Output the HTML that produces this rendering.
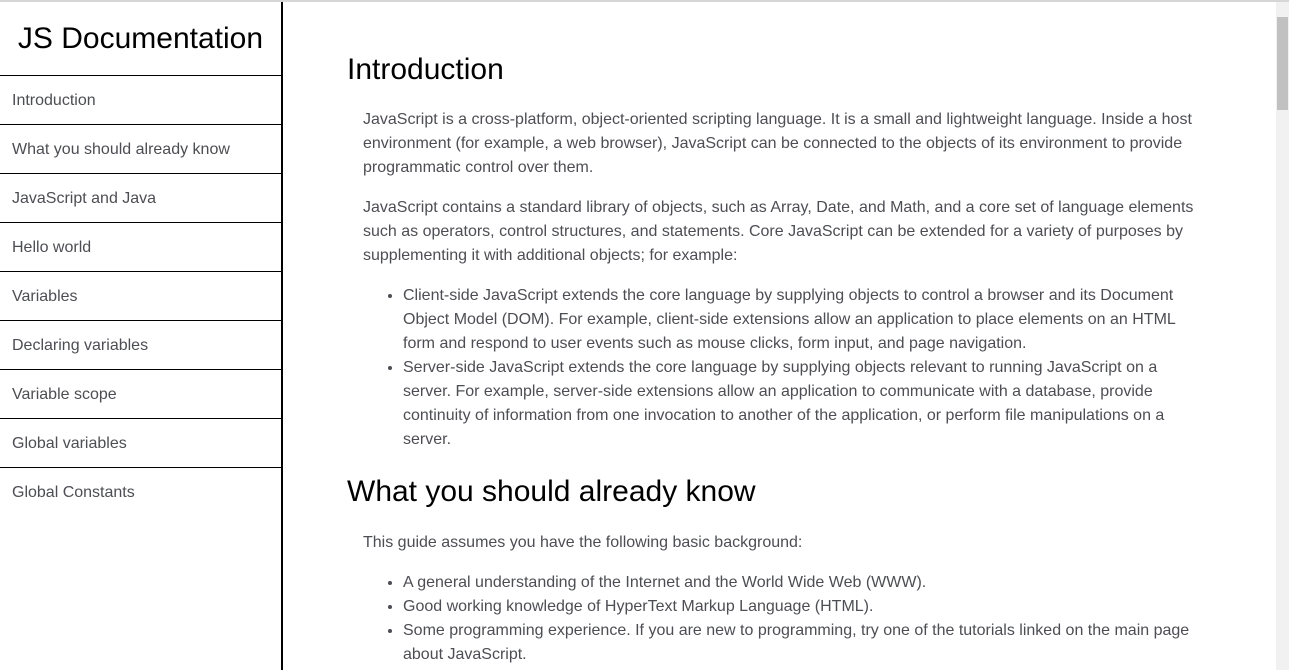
<!DOCTYPE html>
<html><head><style>
html,body{margin:0;padding:0;overflow:hidden;}
body{width:1289px;height:670px;position:relative;background:#fff;font-family:"Liberation Sans",Arial,sans-serif;}
.topline{position:absolute;left:0;top:0;width:1289px;height:2px;background:#d6d6d6;}
#nav{position:absolute;left:0;top:2px;width:281px;height:668px;border-right:2px solid #000;}
#nav h1{margin:0;height:73px;line-height:74px;text-align:center;font-size:30px;font-weight:normal;color:#000;border-bottom:1px solid #000;}
#nav a{display:block;height:48px;line-height:49px;padding-left:12px;font-size:16px;color:#4d4e53;border-bottom:1px solid #000;text-decoration:none;}
#nav a:last-child{border-bottom:none;}
#main{position:absolute;left:347px;top:2px;width:860px;color:#4d4e53;font-size:16px;line-height:24px;}
#main h2{margin:0;font-size:30px;font-weight:normal;color:#000;line-height:34px;}
#main p{margin:0 0 16px 16px;}
#main ul{margin:0 0 16px 16px;padding-left:40px;}
.sb{position:absolute;left:1276px;top:2px;width:13px;height:668px;background:#f1f1f1;}
.th{position:absolute;left:1277px;top:17px;width:11px;height:93px;background:#c1c1c1;}
</style></head><body>
<div class="topline"></div>
<div id="nav">
<h1>JS Documentation</h1>
<a>Introduction</a><a>What you should already know</a><a>JavaScript and Java</a><a>Hello world</a><a>Variables</a><a>Declaring variables</a><a>Variable scope</a><a>Global variables</a><a>Global Constants</a>
</div>
<div id="main">
<h2 style="margin-top:51px;margin-bottom:21px">Introduction</h2>
<p>JavaScript is a cross-platform, object-oriented scripting language. It is a small and lightweight language. Inside a host environment (for example, a web browser), JavaScript can be connected to the objects of its environment to provide programmatic control over them.</p>
<p>JavaScript contains a standard library of objects, such as Array, Date, and Math, and a core set of language elements such as operators, control structures, and statements. Core JavaScript can be extended for a variety of purposes by supplementing it with additional objects; for example:</p>
<ul><li>Client-side JavaScript extends the core language by supplying objects to control a browser and its Document Object Model (DOM). For example, client-side extensions allow an application to place elements on an HTML form and respond to user events such as mouse clicks, form input, and page navigation.</li>
<li>Server-side JavaScript extends the core language by supplying objects relevant to running JavaScript on a server. For example, server-side extensions allow an application to communicate with a database, provide continuity of information from one invocation to another of the application, or perform file manipulations on a server.</li></ul>
<h2 style="margin-top:23px;margin-bottom:22px">What you should already know</h2>
<p>This guide assumes you have the following basic background:</p>
<ul><li>A general understanding of the Internet and the World Wide Web (WWW).</li><li>Good working knowledge of HyperText Markup Language (HTML).</li><li>Some programming experience. If you are new to programming, try one of the tutorials linked on the main page about JavaScript.</li></ul>
</div>
<div class="sb"></div><div class="th"></div>
</body></html>
